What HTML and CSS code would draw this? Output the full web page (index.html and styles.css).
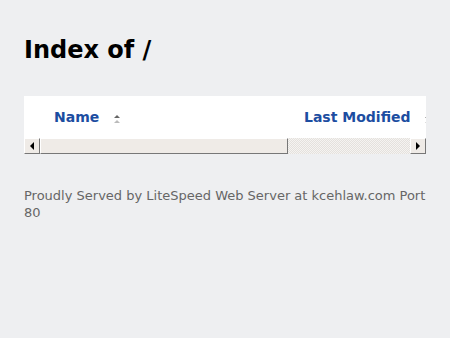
FILE: index.html
```html
<!DOCTYPE html>
<html lang="en">
<head>
    <meta charset="UTF-8">
    <title>Index of /</title>
    <link rel="stylesheet" href="styles.css">
</head>
<body>
    <h1>Index of /</h1>

    <div class="listing">
        <div class="listing-view">
            <table>
                <tr>
                    <th class="col-name"><a href="#">Name</a> <span class="sort"></span></th>
                    <th class="col-date"><a href="#">Last Modified</a> <span class="sort"></span></th>
                </tr>
            </table>
        </div>

        <!-- horizontal scrollbar -->
        <div class="scrollbar">
            <div class="sb-button sb-left"><span class="arrow-left"></span></div>
            <div class="sb-thumb"></div>
            <div class="sb-track"></div>
            <div class="sb-button sb-right"><span class="arrow-right"></span></div>
        </div>
    </div>

    <address>Proudly Served by LiteSpeed Web Server at kcehlaw.com Port 80</address>
</body>
</html>
```

FILE: styles.css
```css
body {
    margin: 0;
    padding: 24px;
    background-color: #eeeff1;
    font-family: "DejaVu Sans", sans-serif;
    color: #000;
}

h1 {
    margin: 11px 0 31px;
    font-size: 24px;
    line-height: 30px;
    font-weight: bold;
}

.listing {
    width: 402px;
}

.listing-view {
    background-color: #fff;
    height: 42px;
    overflow: hidden;
}

table {
    border-collapse: collapse;
    white-space: nowrap;
    table-layout: fixed;
    width: 500px;
}

th {
    text-align: left;
    font-size: 14px;
    padding: 13px 0 0;
    height: 29px;
    vertical-align: top;
}

th a {
    color: #1c4da1;
    text-decoration: none;
}

.col-name {
    padding-left: 30px;
    width: 250px;
}

/* little up/down arrows next to sortable columns */
.sort {
    display: inline-block;
    width: 7px;
    height: 8px;
    margin-left: 10px;
    vertical-align: -1px;
    position: relative;
}

.sort::before,
.sort::after {
    content: '';
    position: absolute;
    left: 0;
    border-left: 3.5px solid transparent;
    border-right: 3.5px solid transparent;
}

.sort::before {
    top: 0;
    border-bottom: 3px solid #666;
}

.sort::after {
    top: 5px;
    border-bottom: 3px solid #bbb;
}

/* fake classic scrollbar */
.scrollbar {
    display: flex;
    height: 16px;
    background-color: #fff;
}

.sb-button {
    width: 16px;
    height: 16px;
    box-sizing: border-box;
    background-color: #efebe7;
    border-top: 1px solid #fff;
    border-left: 1px solid #fff;
    border-right: 1px solid #777;
    border-bottom: 1px solid #777;
    display: flex;
    align-items: center;
    justify-content: center;
}

.arrow-left {
    border-top: 4px solid transparent;
    border-bottom: 4px solid transparent;
    border-right: 4px solid #000;
}

.arrow-right {
    border-top: 4px solid transparent;
    border-bottom: 4px solid transparent;
    border-left: 4px solid #000;
}

.sb-thumb {
    width: 248px;
    box-sizing: border-box;
    background-color: #efebe7;
    border-top: 1px solid #fff;
    border-left: 1px solid #fff;
    border-right: 1px solid #777;
    border-bottom: 1px solid #777;
}

.sb-track {
    flex: 1;
    background-color: #f5f3f1;
    background-image:
        linear-gradient(45deg, #e4e1dd 25%, transparent 25%, transparent 75%, #e4e1dd 75%),
        linear-gradient(45deg, #e4e1dd 25%, transparent 25%, transparent 75%, #e4e1dd 75%);
    background-size: 2px 2px;
    background-position: 0 0, 1px 1px;
}

address {
    margin-top: 33px;
    font-style: normal;
    font-size: 13px;
    line-height: 17px;
    color: #666;
}
```
